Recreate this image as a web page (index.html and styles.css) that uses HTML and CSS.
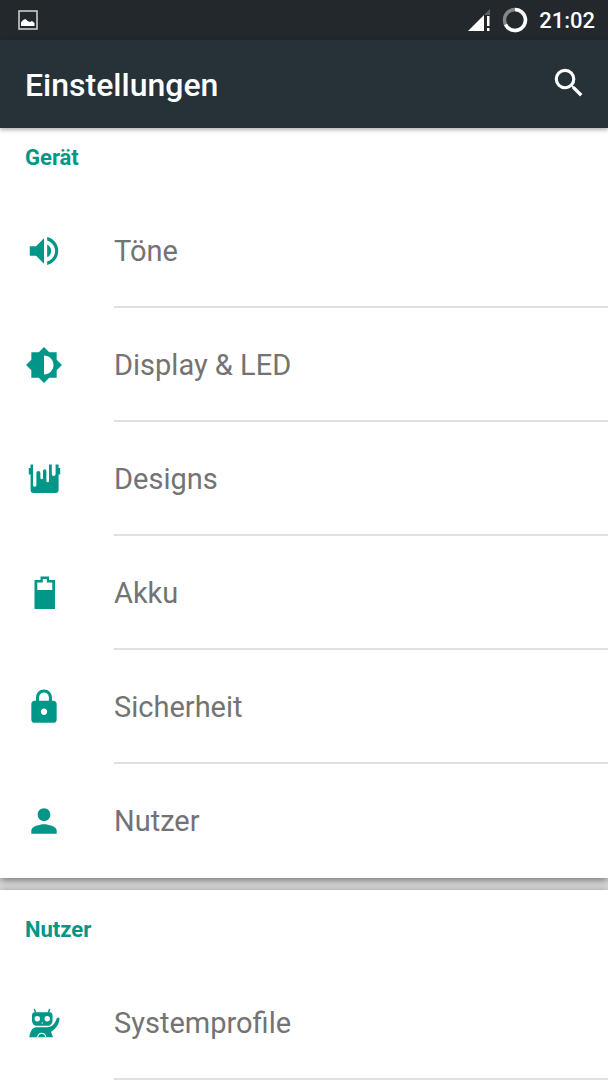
FILE: index.html
```
<!DOCTYPE html>
<html lang="de">
<head>
  <meta charset="UTF-8" />
  <meta name="viewport" content="width=device-width, initial-scale=1.0"/>
  <title>Einstellungen</title>
  <link rel="stylesheet" href="styles.css">
</head>
<body>

<div class="status-bar">
  <svg class="status-picture" width="20" height="20" viewBox="0 0 20 20">
    <rect x="1" y="1" width="18" height="18" fill="none" stroke="#d5d7d8" stroke-width="1.5"/>
    <path d="M3 16v-3.500l2-2.500 2.500-1 2 2 2.500 1 2-1 2.500 2v3z" fill="#fff"/>
  </svg>
  <div class="status-right">
    <svg width="23" height="24" viewBox="0 0 23 24">
      <path d="M0 23L16 7v16z" fill="#fff"/>
      <path d="M16 7l6-6v6z" fill="#5c6063"/>
      <path d="M19 8h2.500v10H19zM19 20h2.500v3H19z" fill="#fff"/>
    </svg>
    <svg width="26" height="26" viewBox="0 0 26 26">
      <circle cx="13" cy="13" r="10.500" fill="none" stroke="#858789" stroke-width="3.500"/>
      <path d="M13 2.500A10.500 10.500 0 1 1 3.500 17.500" fill="none" stroke="#fff" stroke-width="3.500"/>
    </svg>
    <span class="clock">21:02</span>
  </div>
</div>

<header class="toolbar">
  <h1>Einstellungen</h1>
  <button type="button" class="search-btn" aria-label="Suchen">
    <svg width="38" height="38" viewBox="0 0 24 24" fill="#fff">
      <path d="M15.500 14h-.79l-.28-.27A6.470 6.470 0 0 0 16 9.500 6.500 6.500 0 1 0 9.500 16c1.610 0 3.090-.59 4.230-1.570l.27.28v.79l5 4.990L20.490 19l-4.990-5zm-6 0C7.010 14 5 11.990 5 9.500S7.010 5 9.500 5 14 7.010 14 9.500 11.990 14 9.500 14z"/>
    </svg>
  </button>
</header>

<main>
  <section class="card card-first">
    <h2>Gerät</h2>
    <ul>
      <li>
        <a href="#toene">
          <svg class="icon" viewBox="0 0 24 24">
            <path d="M3 9v6h4l5 5V4L7 9H3zm13.500 3c0-1.770-1.020-3.290-2.500-4.030v8.050c1.480-.73 2.500-2.250 2.500-4.020zM14 3.230v2.060c2.890.86 5 3.540 5 6.710s-2.110 5.850-5 6.710v2.060c4.010-.91 7-4.490 7-8.770s-2.990-7.860-7-8.770z"/>
          </svg>
          <span>Töne</span>
        </a>
      </li>
      <li>
        <a href="#display">
          <svg class="icon" viewBox="0 0 24 24">
            <path d="M20 15.310L23.310 12 20 8.690V4h-4.690L12 .69 8.690 4H4v4.690L.69 12 4 15.310V20h4.690L12 23.310 15.310 20H20v-4.690zM12 18V6c3.310 0 6 2.690 6 6s-2.690 6-6 6z"/>
          </svg>
          <span>Display &amp; LED</span>
        </a>
      </li>
      <li>
        <a href="#designs">
          <svg class="icon" viewBox="0 0 38 38">
            <path d="M5.500 4.500H8V25a1.700 1.700 0 0 0 3.400 0V13a2 2 0 0 1 4 0v5a1.300 1.300 0 0 0 2.600 0v-7a1.700 1.700 0 0 1 3.400 0v10a1.300 1.300 0 0 0 2.600 0V4.500h2.800V14a1.900 1.900 0 0 0 3.800 0V4.500h3V8h1.600v6.500h-1.600V30a3 3 0 0 1-3 3h-22a3 3 0 0 1-3-3V14.500H3.800V8h1.700z"/>
          </svg>
          <span>Designs</span>
        </a>
      </li>
      <li>
        <a href="#akku">
          <svg class="icon" viewBox="0 0 38 38">
            <path fill-rule="evenodd" d="M9.500 6H15.500V2.500h8.500V6h6v29H9.500zM12.300 8.500V16h15V8.500h-5.500v-3.500h-4v3.500z"/>
          </svg>
          <span>Akku</span>
        </a>
      </li>
      <li>
        <a href="#sicherheit">
          <svg class="icon" viewBox="0 0 24 24">
            <path d="M18 8h-1V6c0-2.760-2.240-5-5-5S7 3.240 7 6v2H6c-1.100 0-2 .9-2 2v10c0 1.100.9 2 2 2h12c1.100 0 2-.9 2-2V10c0-1.100-.9-2-2-2zm-6 9c-1.100 0-2-.9-2-2s.9-2 2-2 2 .9 2 2-.9 2-2 2zm3.100-9H8.900V6c0-1.710 1.390-3.100 3.100-3.100s3.100 1.390 3.100 3.100v2z"/>
          </svg>
          <span>Sicherheit</span>
        </a>
      </li>
      <li>
        <a href="#nutzer">
          <svg class="icon" viewBox="0 0 24 24">
            <path d="M12 12c2.210 0 4-1.790 4-4s-1.790-4-4-4-4 1.790-4 4 1.790 4 4 4zm0 2c-2.670 0-8 1.340-8 4v2h16v-2c0-2.660-5.330-4-8-4z"/>
          </svg>
          <span>Nutzer</span>
        </a>
      </li>
    </ul>
  </section>

  <section class="card">
    <h2>Nutzer</h2>
    <ul>
      <li>
        <a href="#systemprofile">
          <svg class="icon" viewBox="0 0 38 38">
            <path d="M9.500 5.500l1.500 4M24.500 5.500l-1.500 4" fill="none" stroke="#009688" stroke-width="1.500" stroke-linecap="round"/>
            <path d="M10 8.300h14.500a3 3 0 0 1 3 3v5c0 3.500-2 5.500-5 5.500H12c-3 0-5-2-5-5.500v-5a3 3 0 0 1 3-3z"/>
            <path d="M4.300 33.300c1-6 3-10 7-10h11c5 0 7.500-3.500 9.500-9 .8-1.500 3-.8 2.700 1-1 6-4 10-8.500 12.500l2 5.500z"/>
            <circle cx="12.300" cy="14.700" r="2.700" fill="#fff"/>
            <circle cx="22.200" cy="14.700" r="2.700" fill="#fff"/>
            <circle cx="17.200" cy="19" r=".7" fill="#fff"/>
            <path d="M12.700 33.300a4 4 0 0 1 8 0" fill="none" stroke="#fff" stroke-width="1.200"/>
          </svg>
          <span>Systemprofile</span>
        </a>
      </li>
    </ul>
  </section>
</main>

</body>
</html>
```

FILE: styles.css
```
* {
  margin: 0;
  padding: 0;
  box-sizing: border-box;
}
body {
  font-family: Roboto, sans-serif;
  background-color: #dcdcdc;
  overflow: hidden;
}

.status-bar {
  display: flex;
  align-items: center;
  justify-content: space-between;
  height: 40px;
  padding: 0 13px 0 18px;
  background-color: #22282b;
}
.status-right {
  display: flex;
  align-items: center;
  gap: 11px;
}
.clock {
  color: #fff;
  font-size: 22px;
  font-weight: 500;
}

.toolbar {
  position: relative;
  display: flex;
  align-items: center;
  justify-content: space-between;
  height: 88px;
  padding: 0 20px 2px 25px;
  background-color: #263238;
  box-shadow: 0 2px 4px rgba(0,0,0,0.3);
}
.toolbar h1 {
  padding-top: 4px;
  color: #fff;
  font-size: 32px;
  font-weight: 500;
}
.search-btn {
  border: none;
  background: none;
  cursor: pointer;
}
.search-btn svg {
  display: block;
}

.card {
  background-color: #fff;
  margin-bottom: 12px;
  box-shadow: 0 2px 8px rgba(0,0,0,0.5);
}
.card h2 {
  height: 76px;
  padding: 27px 25px 0;
  color: #009688;
  font-size: 22px;
  font-weight: 700;
  line-height: 26px;
}
.card-first h2 {
  height: 66px;
  padding-top: 17px;
}
.card ul {
  list-style: none;
}
.card a {
  display: flex;
  align-items: center;
  gap: 51px;
  height: 114px;
  padding-left: 25px;
  color: #737373;
  font-size: 29px;
  text-decoration: none;
}
.card a span {
  flex: 1;
  padding-top: 2px;
  line-height: 110px;
  border-bottom: 2px solid #e0e0e0;
}
.card-first li:last-child span {
  border-bottom-color: transparent;
}
.icon {
  width: 38px;
  height: 38px;
  fill: #009688;
}
```
